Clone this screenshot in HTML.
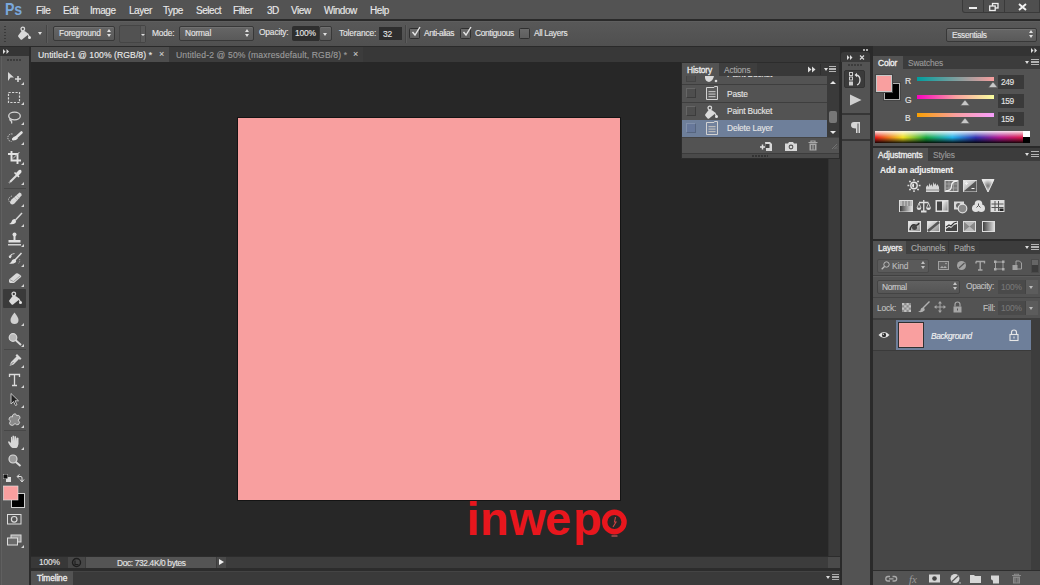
<!DOCTYPE html>
<html><head><meta charset="utf-8">
<style>
*{margin:0;padding:0;box-sizing:border-box}
html,body{width:1040px;height:585px;overflow:hidden;background:#535353;font-family:"Liberation Sans",sans-serif;color:#dcdcdc;position:relative}
.a{position:absolute}
.t{position:absolute;white-space:nowrap;font-size:8.4px;line-height:10px;color:#e6e6e6;letter-spacing:-0.15px;-webkit-text-stroke:0.12px currentColor}
.m{position:absolute;white-space:nowrap;font-size:10px;line-height:12px;color:#e8e8e8;letter-spacing:-0.45px;top:5px;-webkit-text-stroke:0.15px #e8e8e8}
.dd{position:absolute;border:1px solid #383838;border-radius:2px;background:linear-gradient(#666,#595959);box-shadow:inset 0 1px 0 #707070}
.ud{position:absolute;width:5px;height:9px}
.ud:before{content:"";position:absolute;left:0;top:0;border-left:2.5px solid transparent;border-right:2.5px solid transparent;border-bottom:3px solid #e0e0e0}
.ud:after{content:"";position:absolute;left:0;top:5px;border-left:2.5px solid transparent;border-right:2.5px solid transparent;border-top:3px solid #e0e0e0}
.cb{position:absolute;width:11px;height:11px;border:1px solid #303030;background:linear-gradient(#6a6a6a,#5e5e5e);border-radius:1.5px}
svg{position:absolute;overflow:visible}
.tri{position:absolute;width:0;height:0;border-left:3px solid transparent;border-bottom:3px solid #d8d8d8}
</style></head><body>

<!-- ============ MENUBAR ============ -->
<div class="a" style="left:0;top:0;width:1040px;height:19px;background:#535353"></div>
<div class="a" style="left:0;top:19px;width:1040px;height:2px;background:#2a2a2a"></div>
<div class="a" style="left:5px;top:0px;font-size:16.5px;line-height:18px;font-weight:bold;color:#7aa8dc;letter-spacing:-0.2px;transform:scaleX(0.86);transform-origin:0 0">Ps</div>
<div class="m" style="left:36px">File</div>
<div class="m" style="left:63px">Edit</div>
<div class="m" style="left:90px">Image</div>
<div class="m" style="left:129px">Layer</div>
<div class="m" style="left:163px">Type</div>
<div class="m" style="left:196px">Select</div>
<div class="m" style="left:233px">Filter</div>
<div class="m" style="left:267px">3D</div>
<div class="m" style="left:291px">View</div>
<div class="m" style="left:324px">Window</div>
<div class="m" style="left:370px">Help</div>
<!-- window buttons -->
<div class="a" style="left:962px;top:0;width:22px;height:13px;background:#4f4f4f;border:1px solid #3a3a3a;border-top:0;border-radius:0 0 0 3px"></div>
<div class="a" style="left:983px;top:0;width:22px;height:13px;background:#4f4f4f;border:1px solid #3a3a3a;border-top:0"></div>
<div class="a" style="left:1004px;top:0;width:36px;height:13px;background:#4f4f4f;border:1px solid #3a3a3a;border-top:0"></div>
<div class="a" style="left:969px;top:7px;width:8px;height:2px;background:#eee"></div>
<svg style="left:989px;top:3px" width="10" height="8"><rect x="3.5" y="0.5" width="5.5" height="4.5" fill="none" stroke="#eee" stroke-width="1.3"/><rect x="0.7" y="3" width="5.5" height="4.5" fill="#4f4f4f" stroke="#eee" stroke-width="1.3"/></svg>
<svg style="left:1018px;top:3px" width="9" height="8"><path d="M1 1L8 7M8 1L1 7" stroke="#f2f2f2" stroke-width="1.9"/></svg>

<!-- ============ OPTIONS BAR ============ -->
<div class="a" style="left:0;top:21px;width:1040px;height:25px;background:linear-gradient(#585858,#505050);border-top:1px solid #5e5e5e"></div>
<div class="a" style="left:0;top:46px;width:1040px;height:1px;background:#2a2a2a"></div>
<div class="a" style="left:4px;top:26px;width:2px;height:16px;background:repeating-linear-gradient(#3a3a3a 0 1px,transparent 1px 3px)"></div>
<svg style="left:17px;top:25px" width="16" height="16" viewBox="0 0 16 16"><circle cx="5.8" cy="4" r="1.8" fill="none" stroke="#dadada" stroke-width="1.3"/><path d="M4.6 6 L1.2 10.4 Q0.8 11.2 1.5 12 L3.6 14.4 Q4.3 15 5.1 14.5 L11.3 9.6 Q11.6 9 11 8.6 L8.4 6.6 Q6.5 5.4 4.6 6 Z" fill="#dadada"/><path d="M10.6 8.8 L12.4 11.8" stroke="#dadada" stroke-width="1.2"/><circle cx="12.5" cy="12.6" r="1.5" fill="#e6e6e6"/></svg>
<div class="a" style="left:38px;top:32px;width:0;height:0;border-left:2.5px solid transparent;border-right:2.5px solid transparent;border-top:3px solid #e0e0e0"></div>
<div class="a" style="left:46px;top:25px;width:1px;height:18px;background:#454545;box-shadow:1px 0 0 #5d5d5d"></div>
<div class="dd" style="left:53px;top:26px;width:62px;height:15px"></div>
<div class="t" style="left:59px;top:28px">Foreground</div>
<div class="ud" style="left:107px;top:29px"></div>
<div class="a" style="left:119px;top:25px;width:27px;height:18px;background:#525252;border:1px solid #454545;border-radius:2px"></div>
<div class="a" style="left:140px;top:26px;width:5px;height:16px;background:#5a5a5a;border-left:1px solid #4a4a4a"></div>
<div class="a" style="left:141px;top:34px;width:0;height:0;border-left:2px solid transparent;border-right:2px solid transparent;border-top:2px solid #ddd"></div>
<div class="t" style="left:152px;top:28px">Mode:</div>
<div class="dd" style="left:179px;top:26px;width:75px;height:15px"></div>
<div class="t" style="left:185px;top:28px">Normal</div>
<div class="ud" style="left:245px;top:29px"></div>
<div class="t" style="left:259px;top:27px">Opacity:</div>
<div class="a" style="left:292px;top:26px;width:27px;height:15px;background:#2e2e2e;border-radius:2px 0 0 2px"></div>
<div class="t" style="left:295px;top:28px">100%</div>
<div class="dd" style="left:319px;top:26px;width:13px;height:15px"></div>
<div class="a" style="left:323px;top:33px;width:0;height:0;border-left:2.5px solid transparent;border-right:2.5px solid transparent;border-top:3px solid #e0e0e0"></div>
<div class="t" style="left:339px;top:28px">Tolerance:</div>
<div class="a" style="left:379px;top:27px;width:23px;height:13px;background:#2e2e2e"></div>
<div class="t" style="left:383px;top:29px">32</div>
<div class="a" style="left:405px;top:25px;width:1px;height:18px;background:#454545;box-shadow:1px 0 0 #5d5d5d"></div>
<div class="cb" style="left:409px;top:28px"></div>
<svg style="left:411px;top:26px" width="10" height="11"><path d="M1.5 6 L4 9 L9 1" fill="none" stroke="#e6e6e6" stroke-width="1.4"/></svg>
<div class="t" style="left:424px;top:28px;letter-spacing:-0.45px">Anti-alias</div>
<div class="cb" style="left:460px;top:28px"></div>
<svg style="left:462px;top:26px" width="10" height="11"><path d="M1.5 6 L4 9 L9 1" fill="none" stroke="#e6e6e6" stroke-width="1.4"/></svg>
<div class="t" style="left:475px;top:28px;letter-spacing:-0.35px">Contiguous</div>
<div class="cb" style="left:519px;top:28px"></div>
<div class="t" style="left:534px;top:28px;letter-spacing:-0.35px">All Layers</div>
<div class="dd" style="left:946px;top:28px;width:91px;height:14px"></div>
<div class="t" style="left:952px;top:30px;letter-spacing:-0.35px">Essentials</div>
<div class="ud" style="left:1029px;top:30px"></div>

<!-- ============ TAB ROW ============ -->
<div class="a" style="left:31px;top:47px;width:809px;height:15px;background:#383838"></div>
<div class="a" style="left:31px;top:47px;width:138px;height:15px;background:#4d4d4d"></div>
<div class="t" style="left:38px;top:50px;font-size:8.6px;color:#ececec;letter-spacing:0.08px">Untitled-1 @ 100% (RGB/8) *</div>
<div class="t" style="left:159px;top:49px;font-size:9px;color:#cfcfcf">×</div>
<div class="a" style="left:169px;top:47px;width:194px;height:15px;background:#3c3c3c"></div>
<div class="t" style="left:176px;top:50px;font-size:8.6px;color:#9c9c9c;letter-spacing:0.13px">Untitled-2 @ 50% (maxresdefault, RGB/8) *</div>
<div class="t" style="left:353px;top:49px;font-size:9px;color:#c8c8c8">×</div>

<!-- ============ LEFT TOOLBAR ============ -->
<div class="a" style="left:0;top:47px;width:29px;height:538px;background:#535353"></div>
<div class="a" style="left:0;top:47px;width:29px;height:9px;background:#353535"></div>
<div class="a" style="left:1px;top:56px;width:28px;height:529px;background:#565656;border-left:1px solid #606060"></div>
<div class="a" style="left:7px;top:59px;width:15px;height:2px;background:repeating-linear-gradient(90deg,#3c3c3c 0 2px,transparent 2px 3px)"></div>
<div class="a" style="left:29px;top:47px;width:2px;height:538px;background:#2a2a2a"></div>

<!-- ============ DOC CANVAS ============ -->
<div class="a" style="left:31px;top:62px;width:797px;height:494px;background:#272727"></div>
<div class="a" style="left:237px;top:117px;width:384px;height:384px;background:#141414"></div>
<div class="a" style="left:238px;top:118px;width:382px;height:382px;background:#f89f9f"></div>
<div class="a" style="left:828px;top:62px;width:12px;height:494px;background:#3a3a3a;border-left:1px solid #333"></div>
<div class="a" style="left:840px;top:47px;width:2px;height:538px;background:#2a2a2a"></div>

<!-- ============ STATUS BAR ============ -->
<div class="a" style="left:31px;top:556px;width:809px;height:15px;background:#2c2c2c"></div>
<div class="a" style="left:31px;top:557px;width:797px;height:11px;background:#3c3c3c"></div>
<div class="a" style="left:31px;top:557px;width:37px;height:11px;background:#383838"></div>
<div class="t" style="left:39px;top:557px">100%</div>
<div class="a" style="left:68px;top:557px;width:17px;height:11px;background:#474747"></div>
<div class="a" style="left:86px;top:557px;width:130px;height:11px;background:#545454"></div>
<div class="t" style="left:117px;top:558px;letter-spacing:-0.36px">Doc: 732.4K/0 bytes</div>
<div class="a" style="left:217px;top:557px;width:9px;height:11px;background:#4a4a4a"></div>
<div class="a" style="left:219px;top:559px;width:0;height:0;border-top:3.5px solid transparent;border-bottom:3.5px solid transparent;border-left:5px solid #eee"></div>
<div class="a" style="left:828px;top:557px;width:12px;height:11px;background:#4a4a4a"></div>
<div class="a" style="left:31px;top:571px;width:809px;height:14px;background:#3a3a3a;border-top:1px solid #444"></div>
<div class="a" style="left:31px;top:571px;width:42px;height:14px;background:#535353"></div>
<div class="t" style="left:37px;top:573px;-webkit-text-stroke:0.3px #eee;color:#eee">Timeline</div>

<!-- ============ MIDDLE COLUMN ============ -->
<div class="a" style="left:842px;top:47px;width:31px;height:538px;background:#2a2a2a"></div>
<div class="a" style="left:841px;top:52px;width:29px;height:10px;background:#3a3a3a;border-radius:3px 3px 0 0"></div>
<div class="a" style="left:842px;top:62px;width:28px;height:51px;background:#535353"></div>
<div class="a" style="left:842px;top:114px;width:28px;height:471px;background:#535353"></div>

<!-- ============ RIGHT PANELS ============ -->
<div class="a" style="left:873px;top:46px;width:167px;height:10px;background:#333"></div>
<div class="a" style="left:873px;top:56px;width:167px;height:90px;background:#535353"></div>
<div class="a" style="left:873px;top:56px;width:167px;height:13px;background:#3c3c3c"></div>
<div class="a" style="left:873px;top:56px;width:30px;height:13px;background:#535353"></div>
<div class="t" style="left:878px;top:58px;-webkit-text-stroke:0.3px #eee;color:#eee">Color</div>
<div class="t" style="left:908px;top:58px;color:#9a9a9a">Swatches</div>

<div class="a" style="left:873px;top:146px;width:167px;height:2px;background:#2a2a2a"></div>
<div class="a" style="left:873px;top:148px;width:167px;height:91px;background:#535353"></div>
<div class="a" style="left:873px;top:239px;width:167px;height:2px;background:#2a2a2a"></div>
<div class="a" style="left:873px;top:241px;width:167px;height:344px;background:#535353"></div>

<!-- ============ HISTORY PANEL ============ -->
<div class="a" style="left:681px;top:62px;width:159px;height:97px;background:#2c2c2c"></div>
<div class="a" style="left:682px;top:63px;width:157px;height:13px;background:#383838"></div>
<div class="a" style="left:682px;top:63px;width:37px;height:13px;background:#535353"></div>
<div class="a" style="left:719px;top:63px;width:38px;height:13px;background:#3e3e3e"></div>
<div class="t" style="left:687px;top:65px;-webkit-text-stroke:0.3px #eee;color:#eee;color:#e8e8e8">History</div>
<div class="t" style="left:724px;top:65px;color:#a8a8a8">Actions</div>
<svg style="left:808px;top:66px" width="8" height="7"><path d="M0 0.5L3.5 3.5L0 6.5ZM4 0.5L7.5 3.5L4 6.5Z" fill="#dcdcdc"/></svg>
<div class="a" style="left:820px;top:64px;width:1px;height:11px;background:#2e2e2e"></div>
<div class="a" style="left:824px;top:68px;width:0;height:0;border-left:2.5px solid transparent;border-right:2.5px solid transparent;border-top:3px solid #ddd"></div>
<div class="a" style="left:829px;top:66px;width:7px;height:7px;background:repeating-linear-gradient(#b4b4b4 0 1.3px,transparent 1.3px 2.5px)"></div>
<!-- rows -->
<div class="a" style="left:682px;top:76px;width:145px;height:61px;background:#3e3e3e"></div>
<div class="a" style="left:682px;top:76px;width:145px;height:8px;background:#535353"></div>
<div class="a" style="left:682px;top:85px;width:145px;height:17px;background:#535353"></div>
<div class="a" style="left:682px;top:103px;width:145px;height:17px;background:#535353"></div>
<div class="a" style="left:682px;top:120px;width:145px;height:17px;background:#6e7f9a"></div>
<div class="a" style="left:686px;top:76px;width:10px;height:6px;border:1px solid #444;border-top:0;background:#4e4e4e"></div>
<div class="a" style="left:686px;top:88px;width:10px;height:10px;border:1px solid;border-color:#666 #3c3c3c #3c3c3c #666;background:#4e4e4e"></div>
<div class="a" style="left:686px;top:106px;width:10px;height:10px;border:1px solid;border-color:#666 #3c3c3c #3c3c3c #666;background:#4e4e4e"></div>
<div class="a" style="left:686px;top:123px;width:10px;height:10px;border:1px solid;border-color:#8190aa #56657e #56657e #8190aa;background:#67789a"></div>
<!-- icons -->
<svg style="left:704px;top:76px" width="14" height="8"><path d="M1 0 L10 0 Q9 5 5 6 Q1.5 5.5 1 2Z" fill="#dadada"/><circle cx="12" cy="5" r="1.3" fill="#dadada"/></svg>
<svg style="left:706px;top:86px" width="12" height="14"><path d="M0.5 1.5 H8 L8.5 0.5 H11.5 V13.5 H0.5Z" fill="#5c5c5c" stroke="#d2d2d2"/><rect x="2.5" y="5" width="7" height="1.2" fill="#bbb"/><rect x="2.5" y="7.5" width="7" height="1.2" fill="#bbb"/><rect x="2.5" y="10" width="7" height="1.2" fill="#bbb"/></svg>
<svg style="left:704px;top:104px" width="16" height="16" viewBox="0 0 16 16"><circle cx="5.8" cy="4" r="1.8" fill="none" stroke="#dadada" stroke-width="1.3"/><path d="M4.6 6 L1.2 10.4 Q0.8 11.2 1.5 12 L3.6 14.4 Q4.3 15 5.1 14.5 L11.3 9.6 Q11.6 9 11 8.6 L8.4 6.6 Q6.5 5.4 4.6 6 Z" fill="#dadada"/><path d="M10.6 8.8 L12.4 11.8" stroke="#dadada" stroke-width="1.2"/><circle cx="12.5" cy="12.6" r="1.5" fill="#e6e6e6"/></svg>
<svg style="left:706px;top:121px" width="12" height="14"><path d="M0.5 1.5 H8 L8.5 0.5 H11.5 V13.5 H0.5Z" fill="#72829d" stroke="#d2d2d2"/><rect x="2.5" y="5" width="7" height="1.2" fill="#bbb"/><rect x="2.5" y="7.5" width="7" height="1.2" fill="#bbb"/><rect x="2.5" y="10" width="7" height="1.2" fill="#bbb"/></svg>
<div class="a" style="left:727px;top:76px;width:80px;height:4px;overflow:hidden"><div class="t" style="left:0;top:-7px">Paint Bucket</div></div>
<div class="t" style="left:727px;top:89px">Paste</div>
<div class="t" style="left:727px;top:106px">Paint Bucket</div>
<div class="t" style="left:727px;top:123px">Delete Layer</div>
<!-- scrollbar -->
<div class="a" style="left:827px;top:76px;width:12px;height:61px;background:#3a3a3a"></div>
<div class="a" style="left:830px;top:81px;width:0;height:0;border-left:3px solid transparent;border-right:3px solid transparent;border-bottom:3px solid #e8e8e8"></div>
<div class="a" style="left:829px;top:111px;width:8px;height:12px;background:#777;border-radius:2px"></div>
<div class="a" style="left:830px;top:131px;width:0;height:0;border-left:3px solid transparent;border-right:3px solid transparent;border-top:3px solid #e8e8e8"></div>
<!-- bottom bar -->
<div class="a" style="left:682px;top:137px;width:157px;height:16px;background:#535353;border-top:1px solid #444"></div>
<svg style="left:760px;top:141px" width="13" height="10"><path d="M0 6H5M2.5 3.5V8.5" stroke="#e0e0e0" stroke-width="1.5"/><path d="M5 1H10L12 3V10H6V8" fill="#d8d8d8"/><rect x="5.5" y="3" width="4" height="4" fill="#444"/></svg>
<svg style="left:785px;top:141px" width="12" height="10"><path d="M0 2.5H3L4 1H8L9 2.5H12V10H0Z" fill="#d8d8d8"/><circle cx="6" cy="6" r="2.4" fill="#535353"/><circle cx="6" cy="6" r="1.3" fill="#d8d8d8"/></svg>
<svg style="left:808px;top:140px" width="10" height="11"><path d="M0.5 2.5H9.5M3 2.5V1H7V2.5" stroke="#a8a8a8" stroke-width="1.2" fill="none"/><path d="M1.5 3.5H8.5V10.5H1.5Z" fill="#a8a8a8"/><path d="M3.5 5V9.5M5 5V9.5M6.5 5V9.5" stroke="#535353" stroke-width="0.8"/></svg>
<svg style="left:831px;top:143px" width="7" height="7"><path d="M6 1L1 6M6 3.5L3.5 6M6 5.5L5.5 6" stroke="#777" stroke-width="0.9"/></svg>
<div class="a" style="left:682px;top:153px;width:157px;height:5px;background:#4a4a4a;border-top:1px solid #3c3c3c"></div>
<div class="a" style="left:752px;top:155px;width:16px;height:2px;background:repeating-linear-gradient(90deg,#333 0 2px,transparent 2px 3px)"></div>

<!-- ============ MIDDLE COLUMN ICONS ============ -->
<svg style="left:847px;top:55px" width="20" height="5"><path d="M0 0L2.5 2.5L0 5ZM3 0L5.5 2.5L3 5Z" fill="#ddd"/><path d="M13 0.5L17 4.5M17 0.5L13 4.5" stroke="#ddd" stroke-width="1.1"/></svg>
<div class="a" style="left:863px;top:49px;width:1.5px;height:1.5px;background:#aaa;box-shadow:3px 0 0 #aaa"></div>
<div class="a" style="left:848px;top:64px;width:15px;height:2px;background:repeating-linear-gradient(90deg,#3c3c3c 0 2px,transparent 2px 3px)"></div>
<div class="a" style="left:844px;top:70px;width:21px;height:18px;background:#3b3b3b;border-radius:2px;border:1px solid #333"></div>
<svg style="left:847px;top:72px" width="16" height="14"><rect x="2.5" y="0.5" width="3" height="3" fill="none" stroke="#ccc"/><rect x="2.5" y="5" width="3" height="3" fill="none" stroke="#ccc"/><rect x="2" y="9.5" width="4" height="4" fill="#ccc"/><path d="M9 3 Q13 3.5 13 8 Q12.8 12 10 13" fill="none" stroke="#ddd" stroke-width="1.3"/><path d="M7.5 3L10 0.8V5.2Z" fill="#ddd"/></svg>
<div class="a" style="left:842px;top:113px;width:28px;height:2px;background:#363636"></div>
<svg style="left:849px;top:94px" width="13" height="12"><path d="M1 0.5L12.5 6L1 11.5Z" fill="#d0d0d0"/></svg>
<svg style="left:850px;top:121px" width="11" height="13"><path d="M4 1H10V12H8.5V2.5H7.5V12H6V7.5Q1 7.5 1 4.2Q1 1 4 1Z" fill="#d6d6d6"/></svg>
<div class="a" style="left:842px;top:139px;width:28px;height:2px;background:#363636"></div>

<!-- ============ COLOR PANEL ============ -->
<svg style="left:1031px;top:48px" width="7" height="5"><path d="M0 0L2.5 2.5L0 5ZM3.5 0L6 2.5L3.5 5Z" fill="#ddd"/></svg>
<div class="a" style="left:1025px;top:61px;width:0;height:0;border-left:2.5px solid transparent;border-right:2.5px solid transparent;border-top:3px solid #ddd"></div>
<div class="a" style="left:1031px;top:59px;width:8px;height:7px;background:repeating-linear-gradient(#b4b4b4 0 1.3px,transparent 1.3px 2.5px)"></div>
<div class="a" style="left:884px;top:83px;width:16px;height:17px;background:#000;border:1px solid #b0b0b0;box-shadow:0 0 0 1px #444"></div>
<div class="a" style="left:876px;top:75px;width:16px;height:17px;background:#f99f9f;border:1px solid #c8c8c8;box-shadow:0 0 0 1px #444"></div>
<div class="t" style="left:905px;top:76px;font-size:8.5px">R</div>
<div class="t" style="left:905px;top:95px;font-size:8.5px">G</div>
<div class="t" style="left:905px;top:113px;font-size:8.5px">B</div>
<div class="a" style="left:917px;top:77px;width:77px;height:4px;background:linear-gradient(90deg,#009f9f,#f99f9f)"></div>
<div class="a" style="left:917px;top:95px;width:77px;height:4px;background:linear-gradient(90deg,#f900c0,#f99f9f 50%,#f9ff9f)"></div>
<div class="a" style="left:917px;top:113px;width:77px;height:4px;background:linear-gradient(90deg,#f99f00,#f99f9f 50%,#f99fff)"></div>
<svg style="left:988px;top:82px" width="10" height="6"><path d="M0.5 5.5L4.5 0.5Q5 0 5.5 0.5L9.5 5.5Z" fill="#c8c8c8" stroke="#555" stroke-width="0.5"/></svg>
<svg style="left:960px;top:100px" width="10" height="6"><path d="M0.5 5.5L4.5 0.5Q5 0 5.5 0.5L9.5 5.5Z" fill="#c8c8c8" stroke="#555" stroke-width="0.5"/></svg>
<svg style="left:960px;top:118px" width="10" height="6"><path d="M0.5 5.5L4.5 0.5Q5 0 5.5 0.5L9.5 5.5Z" fill="#c8c8c8" stroke="#555" stroke-width="0.5"/></svg>
<div class="a" style="left:998px;top:75px;width:26px;height:14px;background:#3a3a3a"></div>
<div class="a" style="left:998px;top:94px;width:26px;height:14px;background:#3a3a3a"></div>
<div class="a" style="left:998px;top:112px;width:26px;height:14px;background:#3a3a3a"></div>
<div class="t" style="left:1001px;top:77px;letter-spacing:-0.4px">249</div>
<div class="t" style="left:1001px;top:96px;letter-spacing:-0.4px">159</div>
<div class="t" style="left:1001px;top:114px;letter-spacing:-0.4px">159</div>
<div class="a" style="left:875px;top:131px;width:155px;height:12px;background:linear-gradient(90deg,#e81818 0%,#f0e020 18%,#18a840 33%,#20b0e8 50%,#3030b0 65%,#b01890 80%,#e81830 100%)"></div>
<div class="a" style="left:875px;top:131px;width:148px;height:12px;background:linear-gradient(rgba(255,255,255,0.9),rgba(255,255,255,0.15) 45%,rgba(0,0,0,0) 55%,rgba(0,0,0,0.9))"></div>
<div class="a" style="left:1023px;top:131px;width:7px;height:6px;background:#fff"></div>
<div class="a" style="left:1023px;top:137px;width:7px;height:6px;background:#000"></div>

<!-- ============ ADJUSTMENTS PANEL ============ -->
<div class="a" style="left:873px;top:148px;width:167px;height:13px;background:#3c3c3c"></div>
<div class="a" style="left:873px;top:148px;width:55px;height:13px;background:#535353"></div>
<div class="t" style="left:878px;top:150px;-webkit-text-stroke:0.3px #eee;color:#eee">Adjustments</div>
<div class="t" style="left:933px;top:150px;color:#9a9a9a">Styles</div>
<div class="a" style="left:1025px;top:153px;width:0;height:0;border-left:2.5px solid transparent;border-right:2.5px solid transparent;border-top:3px solid #ddd"></div>
<div class="a" style="left:1031px;top:151px;width:8px;height:7px;background:repeating-linear-gradient(#b4b4b4 0 1.3px,transparent 1.3px 2.5px)"></div>
<div class="t" style="left:880px;top:165px;font-weight:bold;color:#f0f0f0">Add an adjustment</div>
<svg style="left:905px;top:177px" width="120" height="60">
<defs>
<linearGradient id="g1" x1="0" y1="0" x2="1" y2="1"><stop offset="0" stop-color="#f0f0f0"/><stop offset="1" stop-color="#8a8a8a"/></linearGradient>
<linearGradient id="g2" x1="0" y1="0" x2="1" y2="0"><stop offset="0" stop-color="#3a3a3a"/><stop offset="1" stop-color="#e0e0e0"/></linearGradient>
<radialGradient id="g3"><stop offset="0" stop-color="#777"/><stop offset="1" stop-color="#e8e8e8"/></radialGradient>
</defs>
<!-- row1 -->
<g transform="translate(2,2)"><circle cx="7" cy="6.5" r="3.2" fill="none" stroke="#e6e6e6" stroke-width="1.4"/><path d="M7 4.5A2 2 0 0 0 7 8.5Z" fill="#e6e6e6"/><path d="M7 0V1.8M7 11.2V13M0.5 6.5H2.3M11.7 6.5H13.5M2.4 1.9L3.6 3.1M10.4 9.9L11.6 11.1M11.6 1.9L10.4 3.1M3.6 9.9L2.4 11.1" stroke="#e0e0e0" stroke-width="1.5"/></g>
<g transform="translate(21,4)"><path d="M0 11V6L1.5 4L2.5 6L3.5 2L4.5 5L5.5 3L6.5 6L7.5 1L8.5 4L9.5 2L10.5 5L11.5 3L13 6V11Z" fill="#d6d6d6"/><rect x="0" y="8.5" width="14" height="1" fill="#888"/></g>
<g transform="translate(39.5,3)"><rect x="0.5" y="0.5" width="13" height="11" fill="#777" stroke="#d8d8d8"/><path d="M1 4H13M1 8H13M4.5 1V11M9 1V11" stroke="#aaa" stroke-width="0.7"/><path d="M1 11Q7 11 7 6Q7 1 13 1" fill="none" stroke="#f0f0f0" stroke-width="1.3"/></g>
<g transform="translate(58,3)"><rect x="0.5" y="0.5" width="13" height="11" fill="url(#g1)" stroke="#e0e0e0"/><path d="M0.5 11.5L13.5 0.5V11.5Z" fill="#555"/><path d="M2 3.5H5M3.5 2V5M8.5 8.5H11.5" stroke="#f0f0f0" stroke-width="1"/></g>
<g transform="translate(76.5,2)"><path d="M0.5 0.5H12.5L6.5 13Z" fill="url(#g3)" stroke="#e6e6e6"/></g>
<!-- row2 -->
<g transform="translate(-6,23)"><rect x="0.5" y="0.5" width="13" height="11" fill="#bbb" stroke="#ddd"/><rect x="1" y="6" width="12" height="5.5" fill="url(#g2)"/><path d="M4 1V6M7 1V6M10 1V6" stroke="#777" stroke-width="1"/></g>
<g transform="translate(12,23)"><path d="M6.75 0V11M2 2.5H11.5" stroke="#e0e0e0" stroke-width="1.3"/><path d="M2 3L0 8H4Z M11.5 3L9.5 8H13.5Z" fill="none" stroke="#ddd" stroke-width="0.8"/><path d="M-0.2 8A2.2 2 0 0 0 4.2 8Z M9.3 8A2.2 2 0 0 0 13.7 8Z" fill="#e0e0e0"/><rect x="4" y="10.5" width="5.5" height="2" fill="#e0e0e0"/></g>
<g transform="translate(30.5,23)"><rect x="0.5" y="0.5" width="12" height="11" fill="#e0e0e0" stroke="#ddd"/><rect x="1.5" y="1.5" width="5" height="9" fill="#444"/><rect x="7" y="1.5" width="5" height="9" fill="url(#g1)"/></g>
<g transform="translate(48.5,23)"><rect x="0.5" y="1.5" width="10" height="8" fill="#d8d8d8"/><circle cx="5" cy="5.5" r="2.5" fill="#666"/><circle cx="9" cy="8.5" r="4.3" fill="#888" stroke="#ddd" stroke-width="1.2"/></g>
<g transform="translate(67,23)"><circle cx="6.5" cy="4" r="3.8" fill="#e0e0e0"/><circle cx="3.8" cy="8.3" r="3.8" fill="#e0e0e0"/><circle cx="9.2" cy="8.3" r="3.8" fill="#e0e0e0"/><path d="M6.5 5.5L4.5 7.5M6.5 5.5L8.5 7.5M6.5 5.5V3.5" stroke="#555" stroke-width="1"/></g>
<g transform="translate(85.5,23)"><rect x="0.5" y="0.5" width="13" height="11" fill="#ddd" stroke="#ddd"/><path d="M1 4H13M1 7.5H13M4.5 1V11M8 1V11" stroke="#555" stroke-width="1"/><rect x="9" y="8.5" width="4" height="2.5" fill="#222"/></g>
<!-- row3 -->
<g transform="translate(3,44)"><rect x="0.5" y="0.5" width="12" height="10" fill="url(#g1)" stroke="#e0e0e0"/><path d="M2 9Q3 3 7 4Q10 5 11 2" fill="none" stroke="#333" stroke-width="1.6"/><circle cx="6.5" cy="6.5" r="2.5" fill="#444"/></g>
<g transform="translate(22,44)"><rect x="0.5" y="0.5" width="12" height="10" fill="url(#g1)" stroke="#e0e0e0"/><path d="M1 10L12 1" stroke="#555" stroke-width="2.5"/></g>
<g transform="translate(40,44)"><rect x="0.5" y="0.5" width="12" height="10" fill="#e8e8e8" stroke="#e0e0e0"/><path d="M1 8L4 6L6 7L9 4L12 3V10H1Z" fill="#444"/><path d="M1 6L4 4L6 5L9 2L12 1" stroke="#333" stroke-width="1.2" fill="none"/></g>
<g transform="translate(58,44)"><rect x="0.5" y="0.5" width="12" height="10" fill="#bbb" stroke="#ddd"/><path d="M1 1L6.5 5.5L1 10ZM12 1L6.5 5.5L12 10Z" fill="#888"/></g>
<g transform="translate(77,44)"><rect x="0.5" y="0.5" width="12" height="10" fill="url(#g2)" stroke="#ddd"/></g>
</svg>

<!-- ============ LAYERS PANEL ============ -->
<div class="a" style="left:873px;top:241px;width:167px;height:13px;background:#3c3c3c"></div>
<div class="a" style="left:873px;top:241px;width:33px;height:13px;background:#535353"></div>
<div class="a" style="left:906px;top:241px;width:42px;height:13px;background:#404040"></div>
<div class="a" style="left:948px;top:241px;width:31px;height:13px;background:#3e3e3e;border-left:1px solid #363636"></div>
<div class="t" style="left:878px;top:243px;-webkit-text-stroke:0.3px #eee;color:#eee">Layers</div>
<div class="t" style="left:911px;top:243px;color:#a8a8a8">Channels</div>
<div class="t" style="left:954px;top:243px;color:#a8a8a8">Paths</div>
<div class="a" style="left:1025px;top:246px;width:0;height:0;border-left:2.5px solid transparent;border-right:2.5px solid transparent;border-top:3px solid #ddd"></div>
<div class="a" style="left:1031px;top:244px;width:8px;height:7px;background:repeating-linear-gradient(#b4b4b4 0 1.3px,transparent 1.3px 2.5px)"></div>
<!-- kind row -->
<div class="dd" style="left:877px;top:259px;width:52px;height:14px;background:#5a5a5a;box-shadow:none;border-color:#4a4a4a"></div>
<svg style="left:881px;top:261px" width="9" height="9"><circle cx="5.5" cy="3.5" r="2.7" fill="none" stroke="#bbb" stroke-width="1"/><path d="M3.5 5.5L0.7 8.3" stroke="#bbb" stroke-width="1.3"/></svg>
<div class="t" style="left:892px;top:261px;color:#bcbcbc">Kind</div>
<div class="ud" style="left:921px;top:261px;opacity:.75"></div>
<svg style="left:937px;top:260px" width="90" height="12">
<g opacity="0.75"><rect x="1.5" y="1.5" width="10" height="8" fill="#666" stroke="#bbb"/><path d="M3 8L5 6L6.5 7.5L8 6L10 8Z" fill="#ccc"/><circle cx="9" cy="3.5" r="0.8" fill="#ccc"/>
<circle cx="24.5" cy="5.5" r="4.5" fill="#bdbdbd"/><path d="M22 8L27.5 3" stroke="#555" stroke-width="1.2"/>
<path d="M39 1.5H47.5V3.5M43.2 1.5V10M41 10H45.5M39 1.5V3.5" stroke="#c4c4c4" stroke-width="1.4" fill="none"/>
<rect x="58.5" y="2" width="7.5" height="7" fill="none" stroke="#bbb"/><rect x="57" y="0.5" width="2.5" height="2.5" fill="#ccc"/><rect x="65" y="0.5" width="2.5" height="2.5" fill="#ccc"/><rect x="57" y="8" width="2.5" height="2.5" fill="#ccc"/><rect x="65" y="8" width="2.5" height="2.5" fill="#ccc"/>
<path d="M79 1H82.5L84.5 3V9H79Z" fill="none" stroke="#bbb"/><rect x="75.5" y="5" width="5" height="5" fill="#bbb"/></g>
</svg>
<div class="a" style="left:1031px;top:259px;width:8px;height:14px;background:#3c3c3c;border:1px solid #4a4a4a"></div>
<div class="a" style="left:1032px;top:260px;width:6px;height:5px;background:#666"></div>
<div class="a" style="left:873px;top:275px;width:167px;height:1px;background:#404040;box-shadow:0 1px 0 #5c5c5c"></div>
<!-- blend row -->
<div class="dd" style="left:877px;top:280px;width:83px;height:14px;background:linear-gradient(#606060,#555);box-shadow:none;border-color:#444"></div>
<div class="t" style="left:882px;top:282px;color:#c8c8c8;letter-spacing:-0.4px">Normal</div>
<div class="ud" style="left:952.5px;top:282px;opacity:.8"></div>
<div class="t" style="left:966px;top:281px;color:#c0c0c0;letter-spacing:-0.35px">Opacity:</div>
<div class="a" style="left:998px;top:280px;width:27px;height:14px;background:#4a4a4a"></div>
<div class="t" style="left:1001px;top:282px;color:#777">100%</div>
<div class="a" style="left:1025px;top:280px;width:13px;height:14px;background:#5c5c5c;border-left:1px solid #444"></div>
<div class="a" style="left:1029px;top:286px;width:0;height:0;border-left:2.5px solid transparent;border-right:2.5px solid transparent;border-top:3px solid #bbb"></div>
<div class="a" style="left:873px;top:297px;width:167px;height:1px;background:#444"></div>
<!-- lock row -->
<div class="t" style="left:877px;top:303px;color:#c0c0c0">Lock:</div>
<svg style="left:901px;top:301px" width="62" height="13"><g opacity="0.8">
<rect x="1" y="2" width="9" height="9" fill="#999"/><path d="M1 2H3.2V4.2H1ZM5.5 2H7.7V4.2H5.5ZM3.2 4.2H5.5V6.5H3.2ZM7.7 4.2H10V6.5H7.7ZM1 6.5H3.2V8.8H1ZM5.5 6.5H7.7V8.8H5.5ZM3.2 8.8H5.5V11H3.2ZM7.7 8.8H10V11H7.7Z" fill="#ddd"/>
<path d="M28.5 0.5L22 7" stroke="#c8c8c8" stroke-width="1.4"/><path d="M22.5 6.5Q19.5 6.5 19.5 9.5Q18 10.5 17 10.5Q20.5 12.5 23.5 9.5Q24.5 8 22.5 6.5Z" fill="#c8c8c8"/>
<path d="M39 1V11M34 6H44" stroke="#bbb" stroke-width="1"/><path d="M39 0L37 2.5H41ZM39 12L37 9.5H41ZM33 6L35.5 4V8ZM45 6L42.5 4V8Z" fill="#bbb"/>
<path d="M54 5.5V3.5Q54 1 56.5 1Q59 1 59 3.5V5.5" fill="none" stroke="#bbb" stroke-width="1.2"/><rect x="52.5" y="5.5" width="8" height="6" fill="#bbb"/><rect x="56" y="7.5" width="1" height="2" fill="#535353"/>
</g></svg>
<div class="t" style="left:983px;top:303px;color:#c0c0c0">Fill:</div>
<div class="a" style="left:998px;top:301px;width:27px;height:14px;background:#4a4a4a"></div>
<div class="t" style="left:1001px;top:303px;color:#777">100%</div>
<div class="a" style="left:1025px;top:301px;width:13px;height:14px;background:#5c5c5c;border-left:1px solid #444"></div>
<div class="a" style="left:1029px;top:307px;width:0;height:0;border-left:2.5px solid transparent;border-right:2.5px solid transparent;border-top:3px solid #bbb"></div>
<div class="a" style="left:873px;top:318px;width:167px;height:2px;background:#3e3e3e"></div>
<!-- layers list -->
<div class="a" style="left:873px;top:320px;width:158px;height:250px;background:#474747"></div>
<div class="a" style="left:1031px;top:320px;width:9px;height:250px;background:#3d3d3d"></div>
<div class="a" style="left:873px;top:320px;width:23px;height:30px;background:#4d4d4d"></div>
<div class="a" style="left:873px;top:350px;width:158px;height:1px;background:#3a3a3a"></div>
<div class="a" style="left:896px;top:320px;width:135px;height:30px;background:#6e7f9a"></div>
<svg style="left:878px;top:331px" width="12" height="8"><path d="M0.5 4Q6 -2 11.5 4Q6 10 0.5 4Z" fill="#e8e8e8"/><circle cx="6" cy="4" r="2.2" fill="#333"/><circle cx="5.3" cy="3.3" r="0.7" fill="#ddd"/></svg>
<div class="a" style="left:898px;top:322px;width:26px;height:26px;background:#303030"></div>
<div class="a" style="left:899px;top:323px;width:24px;height:24px;background:#f99f9f;border:1px solid #f4a8a8"></div>
<div class="t" style="left:931px;top:331px;font-style:italic;color:#f2f2f2;letter-spacing:-0.4px">Background</div>
<svg style="left:1009px;top:329px" width="10" height="12"><path d="M2.5 5.5V3.5Q2.5 1 5 1Q7.5 1 7.5 3.5V5.5" fill="none" stroke="#e6e6e6" stroke-width="1.2"/><rect x="1" y="5.5" width="8" height="6" fill="none" stroke="#e6e6e6" stroke-width="1.1"/><rect x="4.5" y="7.5" width="1" height="2" fill="#e6e6e6"/></svg>
<!-- bottom bar -->
<div class="a" style="left:873px;top:570px;width:167px;height:15px;background:#535353;border-top:1px solid #2e2e2e"></div>
<svg style="left:885px;top:573px" width="140" height="12"><g>
<path d="M5 3.5H3Q0.8 3.5 0.8 5.8Q0.8 8 3 8H5M7.5 3.5H9.5Q11.7 3.5 11.7 5.8Q11.7 8 9.5 8H7.5M4 5.8H8.5" fill="none" stroke="#aaa" stroke-width="1.3"/>
<text x="24" y="10" font-family="Liberation Serif" font-style="italic" font-size="11" fill="#999">fx</text>
<rect x="44" y="1.5" width="11" height="8" fill="#d6d6d6"/><circle cx="49.5" cy="5.5" r="2.3" fill="#444"/>
<circle cx="70" cy="5.5" r="4.5" fill="#d6d6d6"/><path d="M67 8.5L73.5 2.5" stroke="#555" stroke-width="1.3"/><path d="M74 9.5L76 9.5L75 11Z" fill="#ddd"/>
<path d="M85 2H89L90 3H96V10H85Z" fill="#d6d6d6"/>
<path d="M106 2.5H114V10.5H108V8.5Q108 6.5 106 6.5Z" fill="#d6d6d6"/><path d="M106 6.5V10.5H108" fill="#535353"/>
<path d="M127 2.5H136M129.5 2.5V1.2H133.5V2.5" stroke="#8a8a8a" stroke-width="1.1" fill="none"/><rect x="128" y="3.5" width="7" height="7" fill="#8a8a8a"/><path d="M130 5V9.5M131.5 5V9.5M133 5V9.5" stroke="#535353" stroke-width="0.7"/>
</g></svg>

<!-- ============ TOOL ICONS ============ -->
<svg style="left:0;top:56px" width="29" height="500" viewBox="0 56 29 500">
<g fill="#d6d6d6" stroke="none">
<!-- triangles -->
<path d="M21 85H24V82Z M21 105H24V102Z M21 125H24V122Z M21 145H24V142Z M21 165H24V162Z M21 185H24V182Z M21 207H24V204Z M21 227H24V224Z M21 247H24V244Z M21 267H24V264Z M21 287H24V284Z M21 307H24V304Z M21 326H24V323Z M21 347H24V344Z M21 368H24V365Z M21 388H24V385Z M21 408H24V405Z M21 428H24V425Z M21 450H24V447Z M21 548H24V545Z"/>
</g>
<!-- separators -->
<rect x="4" y="188" width="22" height="1" fill="#474747"/>
<rect x="4" y="349" width="22" height="1" fill="#474747"/>
<rect x="4" y="430" width="22" height="1" fill="#474747"/>
<!-- move -->
<path d="M8 72L14 77.5L10.5 77.5L8 81Z" fill="#d8d8d8"/>
<path d="M18 76V82M15 79H21" stroke="#d8d8d8" stroke-width="1.6"/>
<!-- marquee -->
<rect x="8.5" y="92.5" width="11" height="10" fill="none" stroke="#d6d6d6" stroke-width="1.2" stroke-dasharray="2.2 1.3"/>
<!-- lasso -->
<ellipse cx="14.5" cy="116" rx="5.8" ry="3.8" fill="none" stroke="#d6d6d6" stroke-width="1.3"/>
<path d="M10 118.5Q9.5 120.5 11.5 121Q12 122 11.5 123.5" fill="none" stroke="#d6d6d6" stroke-width="1.3"/>
<!-- quick select -->
<path d="M12.5 134A3.8 3.8 0 1 0 11.5 141.5" fill="none" stroke="#cfcfcf" stroke-width="1" stroke-dasharray="1.4 0.9"/>
<path d="M21.5 132.5L16 137.5" stroke="#e0e0e0" stroke-width="2.6" stroke-linecap="round"/>
<path d="M16.5 136Q13.5 136 12 138.5Q11.5 140.5 13 140.5Q16.5 140.5 17.8 138.5Z" fill="#e4e4e4"/>
<!-- crop -->
<path d="M11.5 151V160.5H21M8 154H17.5V164" fill="none" stroke="#e4e4e4" stroke-width="1.9"/>
<path d="M13 158.5L19.5 152" stroke="#cfcfcf" stroke-width="1"/>
<!-- eyedropper -->
<path d="M10 182L17.5 174.5" stroke="#dcdcdc" stroke-width="2"/>
<path d="M9.5 182.5L9 183" stroke="#ddd" stroke-width="1.5"/>
<path d="M16 173L19 170Q21 169 21.5 171Q22 172.5 20 174L17.5 176.5Z" fill="#e4e4e4"/>
<path d="M14.5 172.5L19 177" stroke="#e4e4e4" stroke-width="1.6"/>
<!-- healing -->
<path d="M12 196Q9 197 8.5 199.5Q9 202 11 203" fill="none" stroke="#c8c8c8" stroke-width="1" stroke-dasharray="1.2 0.9"/>
<path d="M19.5 192.5Q22 193 21.5 195.5L14.5 203.5Q12 205.5 10.5 203.5Q9.5 201.5 11.5 199.5Z" fill="#d8d8d8"/>
<path d="M14 197L18 201M16 195L20 199" stroke="#888" stroke-width="0.6" stroke-dasharray="0.8 0.8"/>
<!-- brush -->
<path d="M22 213L15.5 220" stroke="#d8d8d8" stroke-width="1.5"/>
<path d="M15 219Q12 219 11.5 222Q10.5 223.5 9 224Q13 225 15.5 223Q17 221 15 219Z" fill="#e2e2e2"/>
<!-- stamp -->
<circle cx="14.5" cy="234.5" r="2" fill="#e0e0e0"/>
<rect x="13.5" y="236" width="2" height="4" fill="#e0e0e0"/>
<rect x="8.5" y="240" width="12" height="2.5" fill="#e0e0e0"/>
<rect x="8" y="244" width="13" height="1.5" fill="#d0d0d0"/>
<!-- history brush -->
<path d="M9.5 258Q10 254 14.5 253.5" fill="none" stroke="#d8d8d8" stroke-width="1.2"/>
<path d="M8.5 256L10.5 258.5L12 255.5Z" fill="#ddd"/>
<path d="M21.5 253L15 260" stroke="#dedede" stroke-width="1.5"/>
<path d="M15 259Q12 259 11.5 261.5Q10.5 263 9 263.5Q13 264.5 15.5 262.5Q17 261 15 259Z" fill="#e2e2e2"/>
<path d="M19.5 259Q20.5 262 18 264" fill="none" stroke="#bbb" stroke-width="0.8" stroke-dasharray="1 0.8"/>
<!-- eraser -->
<path d="M9 279.5L16 273.5Q17 273 18 273.5L21 275.5Q21.5 276.5 21 277L14 283L10 283Q8.5 282 9 279.5Z" fill="#d8d8d8"/>
<path d="M9.5 279.5L13.5 281.5L20.5 275.5" fill="none" stroke="#888" stroke-width="0.7"/>
<!-- selected bucket box -->
<rect x="3" y="289" width="23" height="19" fill="#3a3a3a" rx="1"/>
<g transform="translate(8,290)"><circle cx="5.8" cy="4" r="1.8" fill="none" stroke="#dadada" stroke-width="1.3"/><path d="M4.6 6 L1.2 10.4 Q0.8 11.2 1.5 12 L3.6 14.4 Q4.3 15 5.1 14.5 L11.3 9.6 Q11.6 9 11 8.6 L8.4 6.6 Q6.5 5.4 4.6 6 Z" fill="#dadada"/><path d="M10.6 8.8 L12.4 11.8" stroke="#dadada" stroke-width="1.2"/><circle cx="12.5" cy="12.6" r="1.5" fill="#e6e6e6"/></g>
<!-- drop -->
<path d="M14.5 312.5Q18.5 317.5 18.5 320Q18.5 324 14.5 324Q10.5 324 10.5 320Q10.5 317.5 14.5 312.5Z" fill="#d0d0d0"/>
<!-- dodge -->
<circle cx="13" cy="337.5" r="3.8" fill="#b8b8b8" stroke="#d8d8d8" stroke-width="1.2"/>
<path d="M15.5 340L21 345" stroke="#dadada" stroke-width="1.8"/>
<!-- pen -->
<path d="M17 354L21.5 358.5L20 360L19 359L13.5 364.5L9.5 366L11 362L16.5 356.5L15.5 355.5Z" fill="#d8d8d8"/>
<path d="M10 365.5L13.5 362" stroke="#555" stroke-width="0.7"/>
<!-- type -->
<path d="M9.5 377V374.5H19.5V377M14.5 374.5V385.5M12 385.5H17" fill="none" stroke="#dcdcdc" stroke-width="1.3"/>
<!-- path select -->
<path d="M11 393.5V404L13.5 401.5L15.5 405.5L17 404.8L15 400.8H18.5Z" fill="#222" stroke="#d0d0d0" stroke-width="0.9"/>
<!-- custom shape -->
<path d="M14 414Q16 413 16.5 415.5Q19.5 414.5 20 417Q20.5 419 18 420Q21 422.5 18.5 424.5Q16.5 425.5 15 423.5Q13 426.5 10.5 425Q8.5 423.5 10.5 421Q8 419.5 9.5 417.5Q11 416 12.5 417Q12 414.5 14 414Z" fill="#8a8a8a" stroke="#d8d8d8" stroke-width="0.9"/>
<!-- hand -->
<path d="M11 447Q8.5 444 8 442Q8.5 440.5 10 442L11 443V437.5Q11 436.5 12 437L12.5 441V436Q13 435 14 436L14.5 441V436.5Q15 435.5 16 436.5L16.5 441V438Q17.5 437 18.5 438V444Q18 447 16.5 448H12.5Z" fill="#d6d6d6"/>
<!-- zoom -->
<circle cx="13" cy="459" r="4" fill="#9a9a9a" stroke="#d8d8d8" stroke-width="1.2"/>
<path d="M15.8 462L20.5 466" stroke="#dadada" stroke-width="2"/>
<!-- default colors -->
<rect x="3.5" y="474.5" width="4" height="4" fill="#111" stroke="#ddd" stroke-width="0.8"/>
<rect x="6" y="477" width="5" height="5" fill="#ddd"/>
<rect x="3.5" y="474.5" width="4" height="4" fill="#111"/>
<path d="M17 476.5L19.5 474.5M17 476.5L19 478.5M17.5 476.5H21Q22 476.5 22 478V481M20 479.5L22 482L24 479.5" fill="none" stroke="#ddd" stroke-width="1"/>
<!-- fg/bg -->
<rect x="11.5" y="493.5" width="13" height="14" fill="#000" stroke="#cfcfcf" stroke-width="1"/>
<rect x="3.5" y="486" width="14.5" height="14" fill="#f99f9f" stroke="#e8e8e8" stroke-width="0.6"/>
<!-- quick mask -->
<rect x="7.5" y="514.5" width="13.5" height="9.5" fill="none" stroke="#dcdcdc" stroke-width="1"/>
<circle cx="14.2" cy="519.3" r="2.8" fill="none" stroke="#dcdcdc" stroke-width="1.2"/>
<!-- screen mode -->
<rect x="11" y="535" width="10" height="7" fill="#999" stroke="#ddd" stroke-width="1"/>
<rect x="7.5" y="538" width="10" height="7" fill="#6a6a6a" stroke="#ddd" stroke-width="1"/>
</svg>
<svg style="left:3px;top:49px" width="7" height="5"><path d="M0 0L2.5 2.5L0 5ZM3.5 0L6 2.5L3.5 5Z" fill="#ddd"/></svg>

<!-- ============ WATERMARK ============ -->
<div class="a" style="left:0;top:0;width:1040px;height:585px;font-family:'Liberation Sans',sans-serif;font-weight:bold;font-size:47px;line-height:50px;color:#e8161d">
<span class="a" style="left:466.5px;top:494px">i</span>
<span class="a" style="left:480px;top:494px">n</span>
<span class="a" style="left:509.5px;top:494px">w</span>
<span class="a" style="left:545px;top:494px">e</span>
<span class="a" style="left:573px;top:494px">p</span>
</div>
<svg style="left:592px;top:509px" width="38" height="40"><circle cx="22.4" cy="13" r="9.7" fill="none" stroke="#e8161d" stroke-width="5.4"/><path d="M23.5 8L22.5 13L24 13L21 18" stroke="#c44" stroke-width="1.1" fill="none"/><rect x="19.5" y="26" width="6" height="2" fill="#8a4444"/></svg>

<!-- status icons / timeline menu -->
<svg style="left:71px;top:557px" width="12" height="11"><circle cx="5.5" cy="5.5" r="4" fill="none" stroke="#1e1e1e" stroke-width="1.4"/><path d="M4 3.5V7.5H7.5" fill="none" stroke="#1e1e1e" stroke-width="1.1"/></svg>
<div class="a" style="left:826px;top:576px;width:0;height:0;border-left:2.5px solid transparent;border-right:2.5px solid transparent;border-top:3px solid #ddd"></div>
<div class="a" style="left:832px;top:574px;width:7px;height:7px;background:repeating-linear-gradient(#aaa 0 1.3px,transparent 1.3px 2.5px)"></div>
</body></html>
